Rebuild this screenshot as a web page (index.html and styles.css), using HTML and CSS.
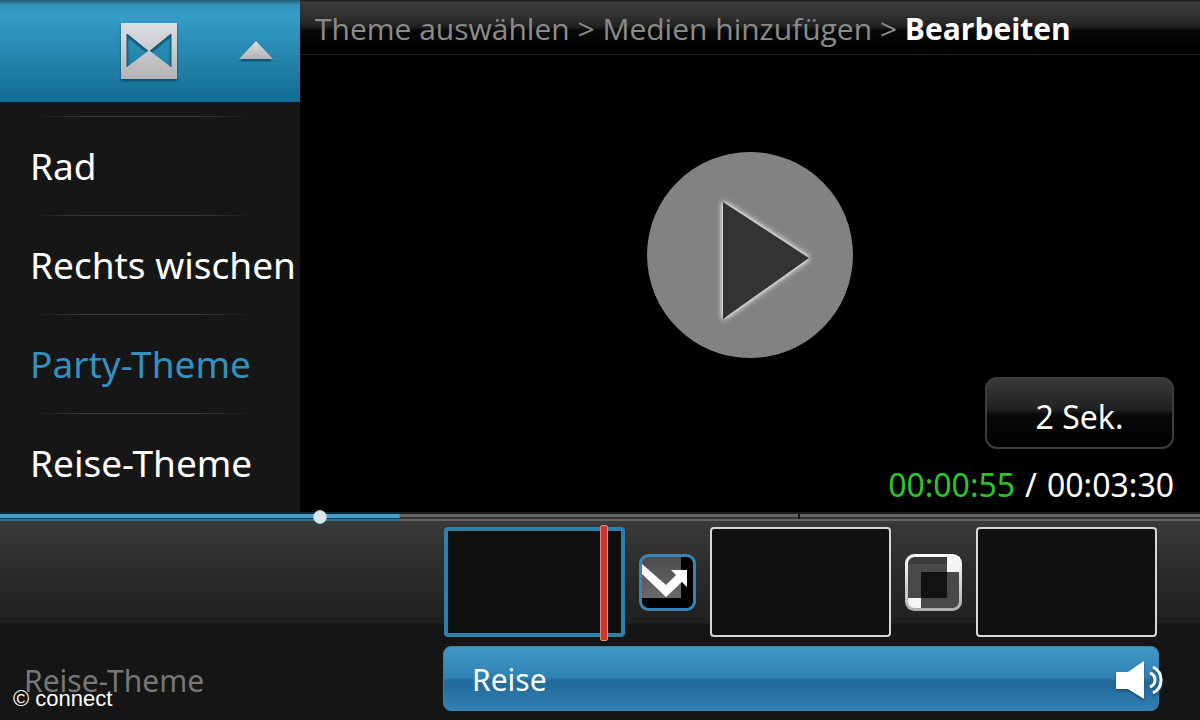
FILE: index.html
```html
<!DOCTYPE html>
<html lang="de">
<head>
<meta charset="utf-8">
<meta name="viewport" content="width=device-width, initial-scale=1">
<title>Bearbeiten</title>
<link rel="stylesheet" href="styles.css">
</head>
<body>
<div class="app">
  <div class="stage">
    <aside class="sidebar">
      <button class="sidebar-toggle" type="button" aria-label="Übergänge einklappen">
        <svg class="toggle-icon" viewBox="0 0 58 58" aria-hidden="true">
          <defs>
            <linearGradient id="silver" x1="0" y1="0" x2="0" y2="1">
              <stop offset="0" stop-color="#dcdfe2"/>
              <stop offset="1" stop-color="#b4b4b6"/>
            </linearGradient>
          </defs>
          <path fill="url(#silver)" fill-rule="evenodd" d="M1 1H57V57H1ZM7 12V45L28 29ZM51 12V45L30 29Z"/>
          <path fill="none" stroke="#175d7c" stroke-width="1" d="M7 45V12L28 29M30 29L51 12V45"/>
        </svg>
        <svg class="toggle-arrow" viewBox="0 0 36 20" aria-hidden="true">
          <path fill="url(#silver)" d="M18 0L35 18H1Z"/>
        </svg>
      </button>
      <ul class="effects">
        <li class="effect"><button class="effect-button" type="button">Rad</button></li>
        <li class="effect"><button class="effect-button" type="button">Rechts wischen</button></li>
        <li class="effect"><button class="effect-button selected" type="button">Party-Theme</button></li>
        <li class="effect"><button class="effect-button" type="button">Reise-Theme</button></li>
      </ul>
    </aside>
    <main class="preview">
      <nav class="breadcrumb" aria-label="Schritte">
        <a class="crumb" href="#theme">Theme auswählen</a> &gt;
        <a class="crumb" href="#medien">Medien hinzufügen</a> &gt;
        <strong class="current">Bearbeiten</strong>
      </nav>
      <button class="play" type="button" aria-label="Abspielen">
        <svg class="play-icon" viewBox="0 0 206 206" aria-hidden="true">
          <path class="play-shape" d="M76 50L162 106L76 167Z"/>
        </svg>
      </button>
      <div class="status">
        <button class="duration" type="button">2 Sek.</button>
        <div class="time"><span class="elapsed">00:00:55</span><span>/</span><span>00:03:30</span></div>
      </div>
    </main>
  </div>
  <input class="seek" type="range" min="0" max="210" step="any" value="55.4" aria-label="Position">
  <section class="timeline">
    <div class="clips">
      <button class="clip active" type="button" aria-label="Clip 1"><span class="playhead"></span></button>
      <button class="transition" type="button" aria-label="Übergang 1">
        <svg class="transition-icon" viewBox="0 0 57 57" aria-hidden="true">
          <defs>
            <linearGradient id="tile" x1="0" y1="0" x2="0" y2="1">
              <stop offset="0" stop-color="#4c4c4e"/>
              <stop offset="1" stop-color="#69696a"/>
            </linearGradient>
          </defs>
          <rect x="1" y="1" width="55" height="55" rx="9" fill="#000"/>
          <path fill="url(#tile)" d="M3 3H42V44H3Z"/>
          <path fill="#fff" d="M3 10L27 31L37 21L32 16H48V33L43 28L27 43L3 20Z"/>
          <rect x="1.500" y="1.500" width="54" height="54" rx="8" fill="none" stroke="#3b83b5" stroke-width="3"/>
        </svg>
      </button>
      <button class="clip" type="button" aria-label="Clip 2"></button>
      <button class="transition" type="button" aria-label="Übergang 2">
        <svg class="transition-icon" viewBox="0 0 57 57" aria-hidden="true">
          <defs>
            <linearGradient id="rim" x1="0" y1="0" x2="0" y2="1">
              <stop offset="0" stop-color="#fff"/>
              <stop offset="1" stop-color="#b0b0b0"/>
            </linearGradient>
          </defs>
          <rect x="1" y="1" width="55" height="55" rx="9" fill="#494949"/>
          <path fill="#3a3a3a" d="M3 3H42V10H3Z"/>
          <path fill="#121212" d="M16 18H42V44H16Z"/>
          <path fill="#f4f4f4" d="M42 3H55V18H42ZM3 44H16V55H3Z"/>
          <rect x="1.500" y="1.500" width="54" height="54" rx="8" fill="none" stroke="url(#rim)" stroke-width="3"/>
        </svg>
      </button>
      <button class="clip" type="button" aria-label="Clip 3"></button>
    </div>
    <div class="audio">
      <span class="audio-label">Reise-Theme</span>
      <button class="track" type="button">
        <span class="track-name">Reise</span>
        <svg class="speaker" viewBox="0 0 48 38" aria-hidden="true">
          <path fill="#fff" d="M1 11H13L29 0V38L13 28H1Z"/>
          <path fill="none" stroke="#fff" stroke-width="3" d="M35 12Q40 14 40 19T35 26M38 6Q46 10 46 19T38 32"/>
        </svg>
      </button>
    </div>
  </section>
  <div class="credit">© connect</div>
</div>
</body>
</html>
```
FILE: styles.css
```css
* {
  box-sizing: border-box;
}

body {
  margin: 0;
  background: #151515;
  color: #fff;
  font-family: "Noto Sans", "Open Sans", sans-serif;
  font-size: 30px;
  line-height: 40px;
}

button {
  margin: 0;
  padding: 0;
  border: 0;
  background: none;
  color: inherit;
  font: inherit;
  cursor: pointer;
}

.app {
  position: relative;
  display: flex;
  flex-direction: column;
  min-height: 100vh;
}

.stage {
  flex: 1;
  display: grid;
  grid-template-columns: 25% 1fr;
}

.sidebar {
  background: #161616;
}

.sidebar-toggle {
  display: flex;
  align-items: center;
  justify-content: flex-end;
  gap: 60px;
  width: 100%;
  height: 102px;
  padding-right: 26px;
  background: linear-gradient(#235d74 0, #3494b9 5px, #359dc6 16px, #177199 92px, #126c93 100%);
}

.toggle-icon {
  width: 58px;
  height: 58px;
  filter: drop-shadow(0 2px 1px #0b4a66);
}

.toggle-arrow {
  width: 36px;
  height: 20px;
  filter: drop-shadow(0 2px 1px #0b4a66);
}

.effects {
  margin: 0;
  padding: 14px 0 0;
  list-style: none;
}

.effect {
  height: 99px;
  background: linear-gradient(90deg, transparent 32px, #383838 80px, #383838 200px, transparent 256px) top / 100% 1px no-repeat;
}

.effect-button {
  width: 100%;
  height: 100%;
  padding-left: 30px;
  font-size: 37px;
  text-align: left;
  white-space: nowrap;
}

.effect-button.selected {
  color: #3391c0;
}

.preview {
  display: flex;
  flex-direction: column;
  background: #000;
}

.breadcrumb {
  height: 55px;
  padding: 9px 15px 0;
  border-bottom: 1px solid #222;
  background: linear-gradient(#161616 0, #3a3a3a 2px, #303030 16px, #202020 27px, #090909 30px, #000 100%);
  color: #8b8b8b;
  font-family: "Open Sans", "Noto Sans", sans-serif;
  white-space: nowrap;
}

.crumb {
  color: inherit;
  text-decoration: none;
}

.current {
  color: #fff;
}

.play {
  align-self: center;
  width: 206px;
  height: 206px;
  margin-top: 97px;
  border-radius: 50%;
  background: #828282;
}

.play-icon {
  display: block;
}

.play-shape {
  fill: #333;
  filter: drop-shadow(0 0 2px #fff) drop-shadow(0 0 3px #ddd);
}

.status {
  display: flex;
  flex-direction: column;
  align-items: flex-end;
  gap: 16px;
  margin-top: auto;
  padding: 0 26px 7px;
  font-size: 32px;
}

.duration {
  width: 189px;
  height: 72px;
  padding-top: 8px;
  border: 2px solid #3d3d3d;
  border-radius: 12px;
  background: linear-gradient(#393939 0, #202020 45%, #090909 52%, #000 100%);
}

.time {
  display: flex;
  gap: 10px;
}

.elapsed {
  color: #2bc52b;
}

.seek {
  position: relative;
  appearance: none;
  display: block;
  width: 100%;
  height: 9px;
  margin: 0;
  background:
    linear-gradient(#0b2938 2px, #4c9cc9 2px, #4c9cc9 6px, #103d55 6px, #103d55 7px, #2f7390 7px) left / 33.3% 100% no-repeat,
    linear-gradient(90deg, #161616, #161616) 66.6% 50% / 2px 5px no-repeat,
    linear-gradient(#1c1c1c 2px, #656565 2px, #656565 5px, #343434 5px, #343434 7px, #646464 7px);
}

.seek::-webkit-slider-thumb {
  appearance: none;
  width: 14px;
  height: 14px;
  border: 1px solid #a5c3d1;
  border-radius: 50%;
  background: #dce8ee;
}

.timeline {
  display: flex;
  flex-direction: column;
  gap: 9px;
  padding: 6px 41px 9px 0;
  background: linear-gradient(#3a3a3a 0, #2b2b2b 50px, #202020 102px, #151515 103px);
}

.clips {
  display: flex;
  align-items: center;
  gap: 14px;
  padding-left: 444px;
}

.clip {
  position: relative;
  flex: none;
  width: 181px;
  height: 110px;
  border: 2px solid #d8d8d8;
  border-radius: 4px;
  background: #101010;
}

.clip.active {
  border: 4px solid #2f7fa8;
}

.playhead {
  position: absolute;
  top: -6px;
  right: 13px;
  bottom: -8px;
  width: 8px;
  border: 1px solid #dc8a80;
  border-radius: 2px;
  background: #d0352b;
}

.transition {
  flex: none;
  width: 57px;
  height: 57px;
}

.transition-icon {
  display: block;
}

.audio {
  display: flex;
  align-items: center;
}

.audio-label {
  flex: none;
  width: 443px;
  padding: 4px 0 0 24px;
  color: #777;
}

.track {
  flex: 1;
  display: flex;
  align-items: center;
  justify-content: space-between;
  height: 65px;
  padding: 2px 0 0 28px;
  border: 1px solid #3c83ae;
  border-radius: 8px;
  background: linear-gradient(#4198c6 0, #2f83b4 48%, #21699a 54%, #3080b0 100%);
}

.speaker {
  width: 48px;
  height: 38px;
  margin-right: -5px;
  filter: drop-shadow(0 2px 1px #1b5074);
}

.credit {
  position: absolute;
  left: 13px;
  bottom: 9px;
  font-family: "Liberation Sans", Arial, sans-serif;
  font-size: 22px;
  line-height: 24px;
}
```
